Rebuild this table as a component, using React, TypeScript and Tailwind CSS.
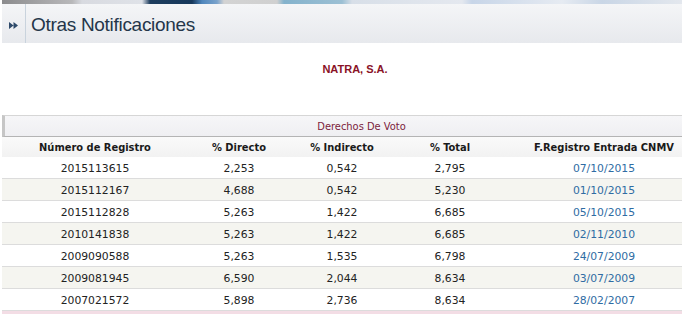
import React from "react";

const ROWS = [
  ["2015113615", "2,253", "0,542", "2,795", "07/10/2015"],
  ["2015112167", "4,688", "0,542", "5,230", "01/10/2015"],
  ["2015112828", "5,263", "1,422", "6,685", "05/10/2015"],
  ["2010141838", "5,263", "1,422", "6,685", "02/11/2010"],
  ["2009090588", "5,263", "1,535", "6,798", "24/07/2009"],
  ["2009081945", "6,590", "2,044", "8,634", "03/07/2009"],
  ["2007021572", "5,898", "2,736", "8,634", "28/02/2007"],
];

const COLS = "grid grid-cols-[186px_102px_104px_112px_174px]";

function HeaderBar() {
  return (
    <div className="ml-[2px]">
      {/* decorative stripe across the top */}
      <div className="h-[4px] bg-[linear-gradient(90deg,#8c8c8e_0px,#b8b8ba_70px,#d8dae0_80px,#dfe2e8_140px,#1e3d5e_148px,#17395c_190px,#4f86bc_200px,#7aa3cc_215px,#d3d3d3_222px,#d0d0d0_275px,#84b2cc_282px,#9cc0d4_340px,#d8dfe8_350px,#e4e8ef_460px,#c7d5e8_470px,#e6ebf2_560px,#c9d6e6_600px,#e4e8ee_682px)]" />
      <div className="flex h-[39px] items-stretch bg-[linear-gradient(180deg,#f4f5f7,#e7e9ed)]">
        <div className="flex w-[24px] items-center justify-center border-r border-[#c9d3dd]">
          <svg width="9" height="7" viewBox="0 0 9 7" className="mt-[3px]">
            <path d="M0 0 L4.5 3.5 L0 7 Z M4.5 0 L9 3.5 L4.5 7 Z" fill="#2e4a6a" />
          </svg>
        </div>
        <h1 className="pl-[5px] pt-[9px] font-['Liberation_Sans',Arial,sans-serif] text-[19px] leading-[24px] tracking-[-0.3px] text-[#24364a]">
          Otras Notificaciones
        </h1>
      </div>
    </div>
  );
}

export default function App() {
  return (
    <div className="h-[314px] w-[682px] overflow-hidden bg-white">
      <HeaderBar />
      <p className="mt-[20px] pl-[28px] text-center font-['Liberation_Sans',Arial,sans-serif] text-[11px] font-bold leading-[13px] text-[#8a1226]">
        NATRA, S.A.
      </p>

      <div className="mt-[39px] ml-[2px] font-['DejaVu_Sans_Condensed','DejaVu_Sans',Tahoma,sans-serif] text-[11px]">
        <div className="h-[22px] border-t border-b border-t-[#d6d6d6] border-b-[#b4b4b4] border-l-[3px] border-l-[#c6c6c6] bg-[linear-gradient(180deg,#f6f6f8,#efeff2)] pl-[36px] pt-[1px] text-center leading-[20px] text-[#7c1d3c]">
          Derechos De Voto
        </div>
        <div className={`${COLS} h-[20px] items-center bg-[linear-gradient(180deg,#fafafa,#f2f2f2)] pt-[2px] text-center font-bold text-[#1a1a1a]`}>
          <span>Número de Registro</span>
          <span>% Directo</span>
          <span>% Indirecto</span>
          <span>% Total</span>
          <span className="pl-[22px]">F.Registro Entrada CNMV</span>
        </div>
        {ROWS.map((r, i) => (
          <div
            key={r[0]}
            className={`${COLS} h-[22px] items-center border-b border-[#dcdcdc] pt-[3px] text-center font-['DejaVu_Sans',sans-serif] text-[10.8px] text-[#222] ${i % 2 === 1 ? "bg-[#f5f5f0]" : "bg-white"}`}
          >
            <span>{r[0]}</span>
            <span>{r[1]}</span>
            <span>{r[2]}</span>
            <span>{r[3]}</span>
            <span className="pl-[22px] text-[#2f6ca3]">{r[4]}</span>
          </div>
        ))}
        <div className="h-[4px] bg-[#f3dde5]" />
      </div>
    </div>
  );
}
